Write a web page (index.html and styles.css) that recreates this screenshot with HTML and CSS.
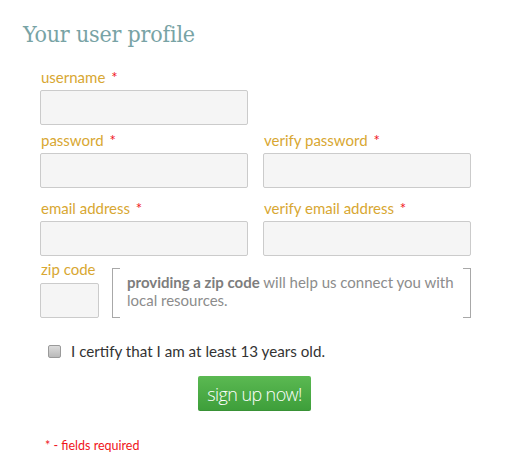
FILE: index.html
```html
<!DOCTYPE html>
<html>
<head>
<meta charset="utf-8">
<link rel="stylesheet" href="styles.css">
</head>
<body>
<div class="page">
  <h1 class="title">Your user profile</h1>
  <form class="form">
    <div class="row row-1">
      <div class="field">
        <label class="label">username <span class="req">*</span></label>
        <div class="input"></div>
      </div>
    </div>
    <div class="row row-2">
      <div class="field">
        <label class="label">password <span class="req">*</span></label>
        <div class="input"></div>
      </div>
      <div class="field">
        <label class="label">verify password <span class="req">*</span></label>
        <div class="input"></div>
      </div>
    </div>
    <div class="row row-3">
      <div class="field">
        <label class="label">email address <span class="req">*</span></label>
        <div class="input"></div>
      </div>
      <div class="field">
        <label class="label">verify email address <span class="req">*</span></label>
        <div class="input"></div>
      </div>
    </div>
    <div class="zip-row">
      <div class="zip-field">
        <label class="label zip-label">zip code</label>
        <div class="input zip-input"></div>
      </div>
      <div class="note">
        <p class="note-text"><strong class="note-strong">providing a zip code</strong> will help us connect you with<br>local resources.</p>
      </div>
    </div>
    <label class="certify">
      <span class="checkbox"></span>
      <span>I certify that I am at least 13 years old.</span>
    </label>
    <div class="actions">
      <button type="button" class="btn">sign up now!</button>
    </div>
    <p class="required">* - fields required</p>
  </form>
</div>
</body>
</html>
```

FILE: styles.css
```css
html, body {
  margin: 0;
  padding: 0;
  background: #fff;
}
.page {
  padding: 19px 0 0 23px;
  width: 487px;
  font-family: "Lato", "Open Sans", sans-serif;
}
.title {
  margin: 0;
  font-family: "DejaVu Serif Condensed", "DejaVu Serif", serif;
  font-weight: normal;
  font-size: 23px;
  line-height: 31px;
  color: #78a3a5;
  letter-spacing: -0.2px;
}
.form {
  margin: 18px 0 0 17px;
}
.row {
  display: grid;
  grid-template-columns: 208px 208px;
  column-gap: 15px;
}
.row-1 { margin-bottom: 6px; }
.row-2 { margin-bottom: 11px; }
.row-3 { margin-bottom: 4px; }
.label {
  display: block;
  font-size: 15px;
  line-height: 18px;
  height: 18px;
  margin: 0 0 4px 1px;
  color: #d8a732;
}
.req {
  color: #f0141a;
  margin-left: 2px;
}
.input {
  box-sizing: border-box;
  height: 35px;
  border: 1px solid #cbcbcb;
  border-radius: 2px;
  background: #f5f5f5;
}
.zip-row {
  display: flex;
  align-items: flex-end;
  gap: 13px;
}
.zip-label {
  margin-bottom: 5px;
}
.zip-input {
  width: 59px;
}
.note {
  box-sizing: border-box;
  width: 359px;
  height: 50px;
  border-left: 1px solid #a8a8a8;
  border-right: 1px solid #a8a8a8;
  padding: 5px 10px 0 14px;
  background:
    linear-gradient(#a8a8a8, #a8a8a8) left top / 7px 1px no-repeat,
    linear-gradient(#a8a8a8, #a8a8a8) left bottom / 7px 1px no-repeat,
    linear-gradient(#a8a8a8, #a8a8a8) right top / 7px 1px no-repeat,
    linear-gradient(#a8a8a8, #a8a8a8) right bottom / 7px 1px no-repeat;
}
.note-text {
  margin: 0;
  font-size: 15px;
  line-height: 18px;
  color: #8c8c8c;
}
.note-strong {
  color: #7d7d7d;
}
.certify {
  display: flex;
  align-items: center;
  gap: 10px;
  margin: 24px 0 0 8px;
  font-size: 15.2px;
  color: #333;
}
.checkbox {
  box-sizing: border-box;
  width: 13px;
  height: 13px;
  border: 1px solid #9a9a9a;
  border-radius: 2px;
  background: linear-gradient(#dcdcdc, #b9b9b9);
}
.actions {
  display: flex;
  margin: 16px 0 0 158px;
}
.btn {
  width: 113px;
  height: 35px;
  border: none;
  border-radius: 2px;
  background: linear-gradient(#5bb952, #3d9e3a);
  color: #fff;
  font-family: "Open Sans", sans-serif;
  font-weight: 300;
  font-size: 18px;
  letter-spacing: -0.6px;
  padding: 0;
  box-shadow: inset 0 -1px 0 rgba(0,0,0,0.08);
}
.required {
  margin: 27px 0 0 5px;
  font-size: 12.5px;
  color: #f0141a;
}
```
